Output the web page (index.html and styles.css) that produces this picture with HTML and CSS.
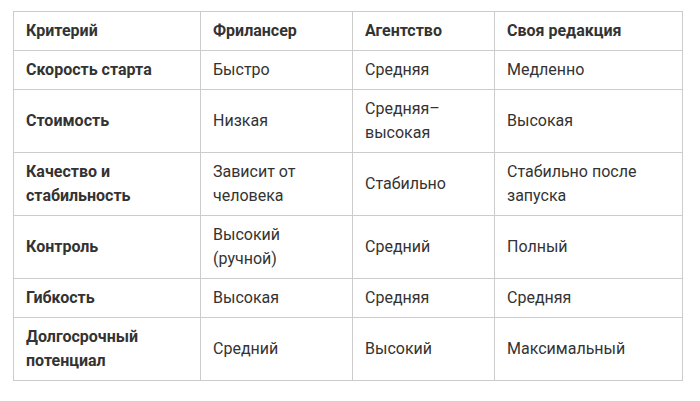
FILE: index.html
```html
<!DOCTYPE html>
<html lang="ru">
<head>
<meta charset="utf-8">
<link rel="stylesheet" href="styles.css">
</head>
<body>
<div class="wrap">
<table class="cmp">
<colgroup>
<col class="c1"><col class="c2"><col class="c3"><col class="c4">
</colgroup>
<thead>
<tr><th>Критерий</th><th>Фрилансер</th><th>Агентство</th><th>Своя редакция</th></tr>
</thead>
<tbody>
<tr><td class="k">Скорость старта</td><td>Быстро</td><td>Средняя</td><td>Медленно</td></tr>
<tr><td class="k">Стоимость</td><td>Низкая</td><td>Средняя–<br>высокая</td><td>Высокая</td></tr>
<tr><td class="k">Качество и<br>стабильность</td><td>Зависит от<br>человека</td><td>Стабильно</td><td>Стабильно после<br>запуска</td></tr>
<tr><td class="k">Контроль</td><td>Высокий<br>(ручной)</td><td>Средний</td><td>Полный</td></tr>
<tr><td class="k">Гибкость</td><td>Высокая</td><td>Средняя</td><td>Средняя</td></tr>
<tr><td class="k">Долгосрочный<br>потенциал</td><td>Средний</td><td>Высокий</td><td>Максимальный</td></tr>
</tbody>
</table>
</div>
</body>
</html>
```

FILE: styles.css
```css
html, body {
  margin: 0;
  padding: 0;
  background: #fff;
}
.wrap {
  padding: 11px 0 0 13px;
}
.cmp {
  border-collapse: collapse;
  table-layout: fixed;
  width: 670px;
  font-family: Roboto, "Liberation Sans", sans-serif;
  font-size: 16px;
  line-height: 24px;
  color: #333;
}
.c1 { width: 187px; }
.c2 { width: 152px; }
.c3 { width: 142px; }
.c4 { width: 188px; }
.cmp th, .cmp td {
  border: 1px solid #ccc;
  padding: 7px 12px;
  text-align: left;
  vertical-align: middle;
}
.cmp th, .cmp td.k {
  font-weight: 700;
}
```
